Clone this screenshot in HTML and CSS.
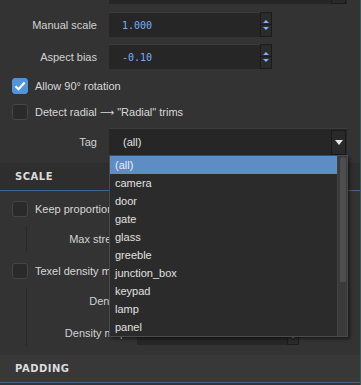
FILE: index.html
```html
<!DOCTYPE html>
<html lang="en">
<head>
  <meta charset="UTF-8">
  <meta name="viewport" content="width=device-width, initial-scale=1.0">
  <title>Trim settings</title>
  <link rel="stylesheet" href="styles.css">
</head>
<body>
  <div class="panel">
    <div class="scroll">
      <div class="form">
        <div class="row first">
          <span class="lbl"></span>
          <div class="combo">
            <span class="combo-text"></span>
            <span class="combo-btn"><span class="tri"></span></span>
          </div>
        </div>
        <div class="row">
          <span class="lbl">Manual scale</span>
          <div class="spin">
            <span class="val">1.000</span>
            <span class="spin-btns"><span class="up"><i></i></span><span class="down"><i></i></span></span>
          </div>
        </div>
        <div class="row">
          <span class="lbl">Aspect bias</span>
          <div class="spin">
            <span class="val">-0.10</span>
            <span class="spin-btns"><span class="up"><i></i></span><span class="down"><i></i></span></span>
          </div>
        </div>
        <label class="check on">
          <span class="box"><svg viewBox="0 0 16 16" width="16" height="16"><path d="M3.5 8.2 L6.6 11.2 L12.6 4.6" fill="none" stroke="#fff" stroke-width="2.2"/></svg></span>
          Allow 90° rotation
        </label>
        <label class="check">
          <span class="box"></span>
          <span>Detect radial <span class="arrow">⟶</span> "Radial" trims</span>
        </label>
        <div class="row">
          <span class="lbl">Tag</span>
          <div class="combo">
            <span class="combo-text">(all)</span>
            <span class="combo-btn"><span class="tri"></span></span>
            <div class="popup">
              <div class="items">
                <div class="item sel">(all)</div>
                <div class="item">camera</div>
                <div class="item">door</div>
                <div class="item">gate</div>
                <div class="item">glass</div>
                <div class="item">greeble</div>
                <div class="item">junction_box</div>
                <div class="item">keypad</div>
                <div class="item">lamp</div>
                <div class="item">panel</div>
              </div>
              <div class="sbar"><div class="thumb"></div></div>
            </div>
          </div>
        </div>
      </div>

      <div class="section open">
        <div class="sec-head">SCALE</div>
        <div class="sec-body">
          <label class="check">
            <span class="box"></span>
            Keep proportional
          </label>
          <div class="group">
            <div class="row">
              <span class="lbl">Max stretch</span>
              <div class="spin">
                <span class="val">2.00</span>
                <span class="spin-btns"><span class="up"><i></i></span><span class="down"><i></i></span></span>
              </div>
            </div>
          </div>
          <label class="check">
            <span class="box"></span>
            Texel density match
          </label>
          <div class="group">
            <div class="row">
              <span class="lbl">Density</span>
              <div class="spin">
                <span class="val">512</span>
                <span class="spin-btns"><span class="up"><i></i></span><span class="down"><i></i></span></span>
              </div>
            </div>
            <div class="row">
              <span class="lbl">Density map</span>
              <div class="spin">
                <span class="val">1.00</span>
                <span class="spin-btns"><span class="up"><i></i></span><span class="down"><i></i></span></span>
              </div>
            </div>
          </div>
        </div>
      </div>

      <div class="section">
        <div class="sec-head closed">PADDING</div>
      </div>
    </div>
  </div>
</body>
</html>
```

FILE: styles.css
```css
* { box-sizing: border-box; }
html, body {
  margin: 0;
  height: 100%;
}
body {
  background-color: #2b2b2b;
  font-family: "Liberation Sans", Arial, sans-serif;
  font-size: 11px;
  color: #d2d2d2;
  overflow: hidden;
}
.panel {
  width: 361px;
  height: 385px;
  overflow: hidden;
  background: #333333;
  border-right: 1px solid #3b5a5a;
}
.scroll { margin-top: -23px; }
.form { padding-bottom: 8px; }
.row {
  display: grid;
  grid-template-columns: 97px auto;
  column-gap: 12px;
  align-items: center;
  margin-top: 7px;
}
.row.first { margin-top: 0; }
.row.first + .row { margin-top: 8px; }
.lbl {
  text-align: right;
  white-space: nowrap;
}

/* spin boxes */
.spin {
  width: 163px;
  height: 25px;
  background: #262626;
  border-top: 1px solid #3b3b3b;
  display: flex;
  justify-content: space-between;
}
.val {
  align-self: center;
  padding-left: 13px;
  font-family: "DejaVu Sans Mono", monospace;
  font-size: 10px;
  color: #78b0f4;
}
.spin-btns {
  width: 12px;
  margin-top: -1px;
  display: flex;
  flex-direction: column;
  background: #2b2b2b;
  border: 1px solid #1b1b1b;
}
.spin-btns span {
  flex: 1;
  display: flex;
  justify-content: center;
}
.up {
  align-items: flex-end;
  padding-bottom: 1px;
  border-bottom: 1px solid #1b1b1b;
}
.down {
  align-items: flex-start;
  padding-top: 2px;
}
.up i, .down i {
  display: block;
  border-left: 3px solid transparent;
  border-right: 3px solid transparent;
}
.up i { border-bottom: 3px solid #7ab4f5; }
.down i { border-top: 3px solid #7ab4f5; }

/* checkboxes */
.check {
  display: flex;
  align-items: center;
  gap: 7px;
  height: 16px;
  margin: 9px 0 0 12px;
  color: #d8d8d8;
  white-space: nowrap;
}
.check + .check { margin-top: 10px; }
.check + .row { margin-top: 8px; }
.arrow {
  font-family: "DejaVu Sans", sans-serif;
  font-size: 10px;
}
.box {
  flex: none;
  width: 16px;
  height: 16px;
  border-radius: 3px;
  background: #2a2a2a;
  border: 1px solid #464646;
}
.box svg { display: block; margin: -1px; }
.check.on .box {
  background: #5193dc;
  border-color: #5193dc;
}

/* combo */
.combo {
  position: relative;
  width: 238px;
  height: 27px;
  display: flex;
  align-items: center;
  background: #262626;
  border-top: 1px solid #3c3c3c;
}
.combo-text {
  flex: 1;
  padding-left: 14px;
  color: #e2e2e2;
}
.combo-btn {
  width: 15px;
  height: 25px;
  margin-right: 1px;
  display: flex;
  align-items: center;
  justify-content: center;
  border: 1px solid #1a1a1a;
  background: #292929;
}
.tri {
  border-left: 4px solid transparent;
  border-right: 4px solid transparent;
  border-top: 5px solid #e6e6e6;
}
.popup {
  position: absolute;
  top: 26px;
  left: 0;
  z-index: 5;
  width: 239px;
  height: 182px;
  display: flex;
  background: #2b2b2b;
  border: 1px solid #4b4b4b;
  box-shadow: 2px 2px 3px rgba(0, 0, 0, 0.45);
}
.items { flex: 1; }
.item {
  height: 18px;
  line-height: 18px;
  padding-left: 5px;
  color: #e0e0e0;
}
.item.sel {
  background: #5e8cc4;
  color: #e9eef6;
}
.sbar {
  width: 10px;
  padding: 1px 1px 0 2px;
  background: #3a3a3a;
  border-left: 1px solid #434343;
}
.thumb {
  height: 125px;
  background: #4e4e4e;
  border-radius: 3px 3px 1px 1px;
}

/* sections */
.sec-head {
  height: 28px;
  padding-left: 15px;
  display: flex;
  align-items: center;
  font-family: "DejaVu Sans", sans-serif;
  font-weight: bold;
  font-size: 10px;
  letter-spacing: 0.5px;
  color: #dcdcdc;
  background: #2e2e2e;
  border-bottom: 1px solid #3e6495;
}
.sec-head.closed {
  background: #383838;
  border-bottom-color: #4b6580;
}
.sec-body { padding: 10px 0 9px; }
.sec-body > .check:first-child { margin-top: 0; }
.group {
  margin: 9px 0 0 26px;
  padding-bottom: 1px;
  border-left: 1px solid #282828;
}
.group .row {
  grid-template-columns: 99px auto;
  column-gap: 11px;
}
.group .row:first-child { margin-top: 0; }
.group .spin { width: 162px; }
.group + .check { margin-top: 11px; }
```
